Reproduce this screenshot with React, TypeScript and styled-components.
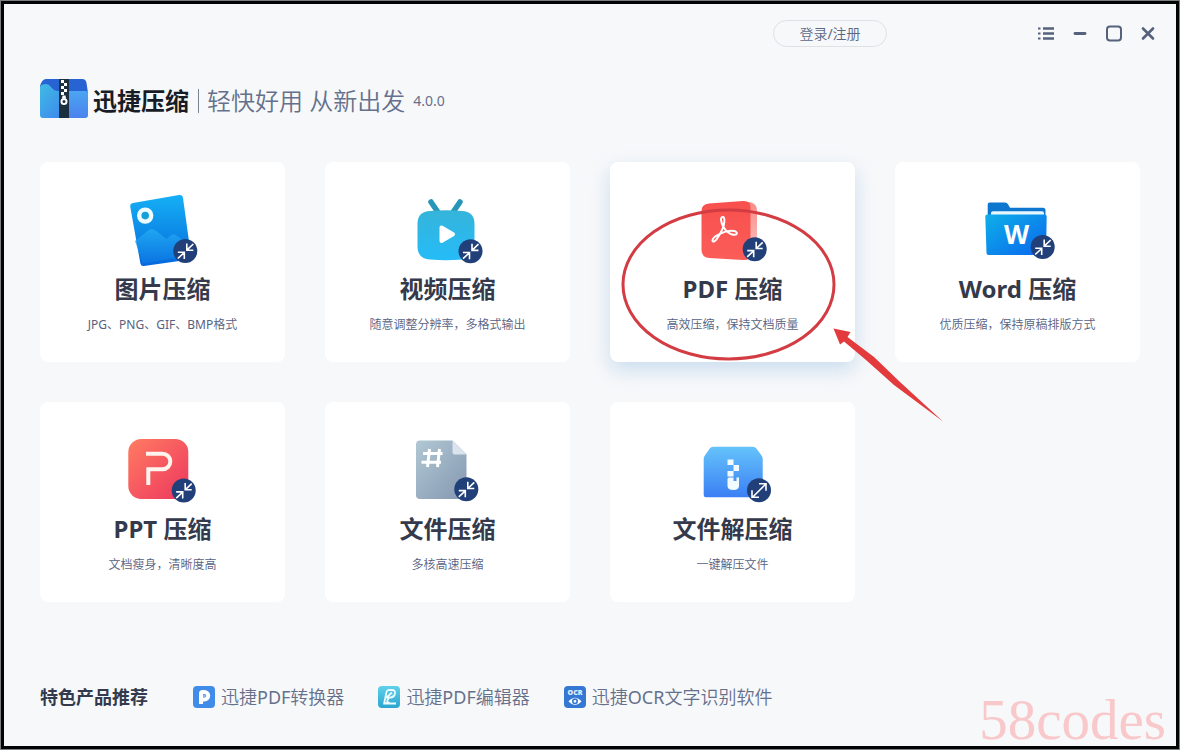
import React from 'react';
import styled, { createGlobalStyle, css } from 'styled-components';

const LIGHT_STACK = '"Noto Sans", "Noto Sans CJK SC DemiLight", "Noto Sans CJK SC", sans-serif';

const GlobalStyle = createGlobalStyle`
  *, *::before, *::after { box-sizing: border-box; }
  body {
    margin: 0;
    font-family: "Noto Sans", "Noto Sans CJK SC", sans-serif;
    color: #343a4b;
  }
  button { font: inherit; color: inherit; cursor: pointer; }
`;

const Page = styled.div`
  display: flex;
  min-height: 100vh;
  padding: 1px;
  background: #7b8180;
`;

const Frame = styled.div`
  display: flex;
  flex: 1;
  flex-direction: column;
  min-width: 0;
  border: 3px solid #020504;
  background: #f7f8fa;
`;

const TitleBar = styled.header`
  display: flex;
  align-items: center;
  justify-content: flex-end;
  padding: 16px 11px 0 36px;
`;

const LoginButton = styled.button`
  width: 114px;
  height: 27px;
  margin-right: 142px;
  padding: 0;
  border: 1px solid #dfe1e5;
  border-radius: 14px;
  background: transparent;
  color: #5c6784;
  font-family: ${LIGHT_STACK};
  font-size: 14px;
  line-height: 24px;
`;

const WindowButton = styled.button`
  display: flex;
  align-items: center;
  justify-content: center;
  width: 34px;
  height: 27px;
  padding: 0;
  border: 0;
  background: transparent;
  color: #56617c;
`;

const Main = styled.main`
  display: flex;
  flex: 1;
  flex-direction: column;
  padding: 32px 36px 38px;
`;

const Brand = styled.div`
  display: flex;
  align-items: center;
  min-height: 44px;

  > svg {
    align-self: flex-start;
  }
`;

const BrandName = styled.h1`
  margin: 0 9px 0 5px;
  color: #171c26;
  font-size: 24px;
  font-weight: 700;
  line-height: 32px;
`;

const Slogan = styled.p`
  display: flex;
  align-items: center;
  margin: 0;
  color: #65708c;
  font-family: ${LIGHT_STACK};
  font-size: 24px;
  line-height: 32px;

  &::before {
    content: "";
    width: 1px;
    height: 24px;
    margin-right: 8px;
    background: #7a8294;
  }
`;

const Version = styled.span`
  margin-left: 8px;
  color: #65708c;
  font-size: 14px;
  line-height: 20px;
`;

const Grid = styled.ul`
  display: grid;
  grid-template-columns: repeat(4, 1fr);
  gap: 40px;
  margin: 39px 0 40px;
  padding: 0;
  list-style: none;
`;

const Cell = styled.li`
  position: relative;
`;

const Card = styled.button<{ $raised?: boolean }>`
  display: flex;
  flex-direction: column;
  align-items: center;
  width: 100%;
  min-height: 200px;
  padding: 28px 8px 24px;
  border: 0;
  border-radius: 8px;
  background: #fff;
  ${({ $raised }) =>
    $raised &&
    css`
      box-shadow: 0 8px 20px rgba(110, 165, 215, 0.32);
    `}
`;

const CardTitle = styled.span`
  margin-top: 3px;
  color: #343a4b;
  font-size: 24px;
  font-weight: 700;
  line-height: 32px;
`;

const CardNote = styled.span`
  margin-top: 10px;
  color: #56617f;
  font-family: ${LIGHT_STACK};
  font-size: 12px;
  line-height: 20px;
`;

const Annotation = styled.svg`
  position: absolute;
  z-index: 1;
  top: 0;
  left: 0;
  pointer-events: none;
`;

const Footer = styled.footer`
  display: flex;
  align-items: center;
  gap: 34px;
  margin-top: auto;
  font-size: 18px;
  line-height: 22px;
`;

const FooterTitle = styled.h2`
  margin: 0 11px 0 0;
  font-size: 18px;
  font-weight: 700;
`;

const ProductLink = styled.a`
  display: flex;
  align-items: center;
  gap: 6px;
  color: #65708c;
  font-family: ${LIGHT_STACK};
  text-decoration: none;
`;

const Watermark = styled.div`
  position: fixed;
  right: 14px;
  bottom: 0;
  color: #f9c8ca;
  font-family: "Liberation Serif", serif;
  font-size: 57px;
  line-height: 60px;
  pointer-events: none;
`;

function Badge({ x, y, expand }: { x: number; y: number; expand?: boolean }) {
  return (
    <g transform={`translate(${x} ${y})`}>
      <circle r="12" fill="#213f78" />
      <g fill="none" stroke="#fff" strokeWidth="1.6">
        {expand ? (
          <path d="M-6.5 7 7 -6.5M0 -6.5H7V.5M-7 0V7H0" />
        ) : (
          <path d="M8 -7 1.5 -.8M1.5 -7.5V-.8H8M-7.5 7.5-1 1.5M-7.5 1.3H-1V8" />
        )}
      </g>
    </g>
  );
}

function Gradient({ id, from, to, diagonal }: { id: string; from: string; to: string; diagonal?: boolean }) {
  return (
    <linearGradient id={id} x1="0" y1="0" x2={diagonal ? '1' : '0'} y2="1">
      <stop offset="0" stopColor={from} />
      <stop offset="1" stopColor={to} />
    </linearGradient>
  );
}

function IconBox({ children }: { children: React.ReactNode }) {
  return (
    <svg width="81" height="80" viewBox="0 0 81 80" aria-hidden="true">
      {children}
    </svg>
  );
}

const ImageIcon = () => (
  <IconBox>
    <defs>
      <Gradient id="img" from="#15b0f5" to="#0668dc" />
      <Gradient id="hill" from="#25aef5" to="#0b78e4" />
    </defs>
    <path d="M11 13 57 5q3.500-.6 4 3L69 66q.5 3-3 3.700L22 76q-3 .5-3.600-2.500L8.300 17q-.6-3.400 2.700-4Z" fill="url(#img)" />
    <path d="m13 51 13-10.500q4-3 8 .2l10.500 8.300 3.500-3q4-3 8 .5l9 7 2 12-46 8Z" fill="url(#hill)" opacity=".75" />
    <circle cx="23.200" cy="25.600" r="6" fill="#16a0d8" stroke="#eefcff" strokeWidth="4.400" />
    <Badge x={63.3} y={61} />
  </IconBox>
);

const VideoIcon = () => (
  <IconBox>
    <defs>
      <Gradient id="tv" from="#35b4da" to="#25bcf8" />
    </defs>
    <path d="m24 12 7.500 11M53 12l-7.500 11" stroke="#2796b8" strokeWidth="5.500" strokeLinecap="round" />
    <path d="M23 21Q39 19.500 55 21 67 21.500 67.500 33V57Q67 69 55 69.500 39 71 23 69.500 11 69 10.500 57V33Q11 21.500 23 21Z" fill="url(#tv)" />
    <path d="M34.500 37.500v13.500l11.500-6.800Z" fill="#fff" stroke="#fff" strokeWidth="4" strokeLinejoin="round" />
    <Badge x={63.5} y={61.2} />
  </IconBox>
);

const PdfIcon = () => (
  <IconBox>
    <defs>
      <Gradient id="pdf" from="#f8504d" to="#fb5d59" />
      <Gradient id="pdfback" from="#f98c88" to="#fdc5c2" />
    </defs>
    <path d="M50 12h7q8 1.500 8 8v38q0 8-8 8h-7Z" fill="url(#pdfback)" />
    <path d="M17 13.500 51 11q7.500-.5 7.500 6V64q0 6.500-7.500 6L17 68q-7.500-.8-7.500-8V21q0-7 7.500-7.500Z" fill="url(#pdf)" />
    <path
      d="M31 27c-3 0-2.500 5 .8 10.500 2.200 3.500 5.500 6.500 9.200 7.200 4.500.8 5.500-2.700 1-3.600-4-.8-9 .4-13 2.200-4.500 2-8.500 4.700-8.500 7 0 2.200 2.500 1.600 4.500-1.500 3-4.500 5.500-9 6.800-13.500.8-3.500 1-8.300-.8-8.300Z"
      fill="none" stroke="#fff" strokeWidth="2" strokeLinejoin="round"
    />
    <Badge x={62.7} y={59.3} />
  </IconBox>
);

const WordIcon = () => (
  <IconBox>
    <defs>
      <Gradient id="wfront" from="#0eb0e8" to="#0a66ee" diagonal />
    </defs>
    <path d="M10.700 27V14.500q0-2 2-2H28q2 0 3 1.800l2 3.500H66q2.500 0 2.500 2.500V27Z" fill="#0d77cf" />
    <path d="M14 25.500v-2.500q0-1.800 2-1.800H65q2 0 2 2v2.300Z" fill="#e5f7ff" />
    <path d="M8.300 26.500q0-2 2-2H67.500q2.200 0 2.200 2L69 63q0 2-2 2H11.500q-2 0-2-2Z" fill="url(#wfront)" />
    <text x="39.500" y="53.500" textAnchor="middle" fontFamily="Open Sans" fontSize="26" fontWeight="700" fill="#fff">W</text>
    <Badge x={65.7} y={57} />
  </IconBox>
);

const PptIcon = () => (
  <IconBox>
    <defs>
      <Gradient id="ppt" from="#ff7c61" to="#ed365f" diagonal />
    </defs>
    <rect x="6.300" y="9" width="60" height="60" rx="13" fill="url(#ppt)" />
    <path d="M24 23.700H40.500a7.800 7.800 0 0 1 0 15.600H26.300V55" fill="none" stroke="#fff4ee" strokeWidth="4" />
    <Badge x={61.7} y={60.6} />
  </IconBox>
);

const FileIcon = () => (
  <IconBox>
    <defs>
      <Gradient id="file" from="#b1c8d4" to="#8597b0" diagonal />
    </defs>
    <path d="M13 10.500H45.500L59.500 24.500V65q0 4-4 4H13q-4 0-4-4V14.500q0-4 4-4Z" fill="url(#file)" />
    <path d="M45.500 10.500 59.500 24.500H47.500q-2 0-2-2Z" fill="#dbe4ec" />
    <path d="m22.500 19-2 18M32.500 19l-2 18M16 23.600H35.500M14.500 32.300H34" fill="none" stroke="#fff" strokeWidth="3" />
    <Badge x={59.3} y={59.3} />
  </IconBox>
);

const UnzipIcon = () => (
  <IconBox>
    <defs>
      <Gradient id="unzip" from="#65c3fa" to="#3b7ff5" />
    </defs>
    <path d="M21 16.700H61q2 0 3.200 1.600l5.500 7.500q1 1.300 1 3V65q0 2.300-2.300 2.300H14q-2.300 0-2.300-2.300V29q0-2 1-3.200l5.200-7.500Q19 16.700 21 16.700Z" fill="url(#unzip)" />
    <path d="M35.500 29.500h6v5.500h5.500v6h-5.500v5.500h-6V41h6v-6h-6Z" fill="#f2fbff" />
    <path d="M35.500 49q0-1.500 1.500-1.500h4.500v3.500h3v-3.500h2.500V56q0 4-5.700 4t-5.800-4Z" fill="#f2fbff" />
    <Badge x={67} y={60.3} expand />
  </IconBox>
);

const AppLogo = () => (
  <svg width="48" height="40" viewBox="0 0 48 40" aria-hidden="true">
    <defs>
      <Gradient id="logo" from="#40bce3" to="#3d82ef" diagonal />
      <Gradient id="logoright" from="#4ca5f2" to="#4b82ee" />
    </defs>
    <path d="M6 0H42q4 0 4.500 4L48 14H0V7Q2 0 6 0Z" fill="#2763d2" />
    <path d="M0 8Q1 5 6 5q3 0 5 3t6 4h10v27H3q-3 0-3-3Z" fill="url(#logo)" />
    <path d="M28 12H46q2 0 2 2V36q0 3-3 3H28Z" fill="url(#logoright)" />
    <path d="M19 0H29V39H19Z" fill="#1c303d" />
    <path d="M21 1h3v3h-3ZM24 4h3v3h-3ZM21 7h3v3h-3ZM24 10h3v3h-3ZM21 13h3v3h-3Z" fill="#fff" />
    <path d="M22.500 16.500h3l.5 3h-4Z" fill="#fff" />
    <circle cx="24" cy="22.500" r="2.500" fill="#1c303d" stroke="#fff" strokeWidth="2" />
  </svg>
);

const ConverterIcon = () => (
  <svg width="22" height="22" viewBox="0 0 22 22" aria-hidden="true">
    <rect width="22" height="22" rx="4" fill="#428ce9" />
    <path d="M8 18V7.500Q8 6 9.500 6H11.500a3.700 3.700 0 0 1 0 7.400H9" fill="none" stroke="#fff" strokeWidth="4" />
    <circle cx="11.300" cy="9.700" r="1.500" fill="#8ab2ee" />
  </svg>
);

const EditorIcon = () => (
  <svg width="22" height="22" viewBox="0 0 22 22" aria-hidden="true">
    <defs>
      <Gradient id="edit" from="#5fd1ea" to="#2ba5cf" />
    </defs>
    <rect width="22" height="22" rx="4" fill="url(#edit)" />
    <path d="M6 18 8.500 6Q9 4 11 4h3q3.500 0 3 3.500T13 11.500H8.500L14 6.500M11 11.500 9 15" fill="none" stroke="#e9fbff" strokeWidth="1.800" strokeLinejoin="round" />
    <path d="M5 18.500 9.500 14.500 12 16.500H18V18.500Z" fill="#e9fbff" />
  </svg>
);

const OcrIcon = () => (
  <svg width="22" height="22" viewBox="0 0 22 22" aria-hidden="true">
    <rect width="22" height="22" rx="4" fill="#3478d4" />
    <text x="11" y="8.500" textAnchor="middle" fontFamily="Open Sans" fontSize="7" fontWeight="800" fill="#e4f0ff">OCR</text>
    <path d="M4.500 15.500Q11 8 17.500 15.500 11 22.500 4.500 15.500Z" fill="#fff" />
    <circle cx="11" cy="15.300" r="2.200" fill="#fff" stroke="#3478d4" strokeWidth="1.600" />
  </svg>
);

const TOOLS = [
  { title: '图片压缩', note: 'JPG、PNG、GIF、BMP格式', Icon: ImageIcon },
  { title: '视频压缩', note: '随意调整分辨率，多格式输出', Icon: VideoIcon },
  { title: 'PDF 压缩', note: '高效压缩，保持文档质量', Icon: PdfIcon, marked: true },
  { title: 'Word 压缩', note: '优质压缩，保持原稿排版方式', Icon: WordIcon },
  { title: 'PPT 压缩', note: '文档瘦身，清晰度高', Icon: PptIcon },
  { title: '文件压缩', note: '多核高速压缩', Icon: FileIcon },
  { title: '文件解压缩', note: '一键解压文件', Icon: UnzipIcon },
];

const PRODUCTS = [
  { name: '迅捷PDF转换器', Icon: ConverterIcon },
  { name: '迅捷PDF编辑器', Icon: EditorIcon },
  { name: '迅捷OCR文字识别软件', Icon: OcrIcon },
];

const WINDOW_ACTIONS = [
  {
    label: '菜单',
    drawing: (
      <>
        <path d="M6 3.500H17M6 8.500H17M6 13.500H17" strokeWidth="2.600" />
        <path d="M1 3.500H3.500M1 8.500H3.500M1 13.500H3.500" strokeWidth="2.200" />
      </>
    ),
  },
  { label: '最小化', drawing: <path d="M4 8.500H14" strokeWidth="2.800" strokeLinecap="round" /> },
  { label: '最大化', drawing: <rect x="2" y="1.500" width="14" height="14" rx="3" strokeWidth="2" /> },
  { label: '关闭', drawing: <path d="m4 3.500 10 10M14 3.500 4 13.500" strokeWidth="2.600" strokeLinecap="round" /> },
];

export default function App() {
  return (
    <Page>
      <GlobalStyle />
      <Frame>
        <TitleBar>
          <LoginButton type="button">登录/注册</LoginButton>
          {WINDOW_ACTIONS.map(({ label, drawing }) => (
            <WindowButton key={label} type="button" aria-label={label}>
              <svg width="18" height="18" viewBox="0 0 18 18" fill="none" stroke="currentColor">
                {drawing}
              </svg>
            </WindowButton>
          ))}
        </TitleBar>
        <Main>
          <Brand>
            <AppLogo />
            <BrandName>迅捷压缩</BrandName>
            <Slogan>轻快好用 从新出发</Slogan>
            <Version>4.0.0</Version>
          </Brand>
          <Grid>
            {TOOLS.map(({ title, note, Icon, marked }) => (
              <Cell key={title}>
                <Card type="button" $raised={marked}>
                  <Icon />
                  <CardTitle>{title}</CardTitle>
                  <CardNote>{note}</CardNote>
                </Card>
                {marked && (
                  <Annotation width="340" height="264" viewBox="0 0 340 264" aria-hidden="true">
                    <ellipse cx="118.500" cy="122.500" rx="105.500" ry="74.500" fill="none" stroke="#d23c42" strokeWidth="3" />
                    <path d="M223.500 166.500 240.500 170 237.500 175 264 195 290 220 333 259.500 284 223 256 198 234 179.500 230 182.500Z" fill="#e33b3d" />
                  </Annotation>
                )}
              </Cell>
            ))}
          </Grid>
          <Footer>
            <FooterTitle>特色产品推荐</FooterTitle>
            {PRODUCTS.map(({ name, Icon }) => (
              <ProductLink key={name} href="#">
                <Icon />
                {name}
              </ProductLink>
            ))}
          </Footer>
        </Main>
      </Frame>
      <Watermark>58codes</Watermark>
    </Page>
  );
}
